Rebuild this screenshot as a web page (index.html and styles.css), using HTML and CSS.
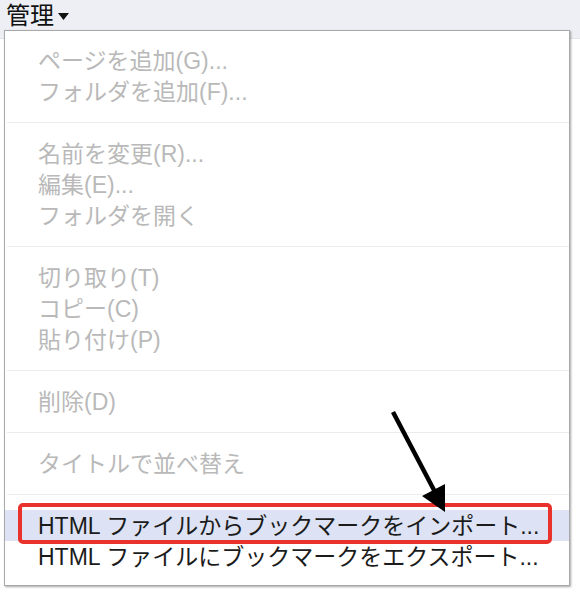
FILE: index.html
```html
<!DOCTYPE html>
<html lang="ja">
<head>
<meta charset="utf-8">
<title>管理メニュー</title>
<link rel="stylesheet" href="styles.css">
</head>
<body>
<div class="topbar">
  <span class="title">管理</span>
  <svg class="caret" width="11" height="7" viewBox="0 0 11 7"><polygon points="0,0 11,0 5.5,7" fill="#111"/></svg>
</div>
<div class="page"></div>
<div class="menu">
  <div class="item disabled">ページを追加(G)...</div>
  <div class="item disabled">フォルダを追加(F)...</div>
  <div class="sep"></div>
  <div class="item disabled">名前を変更(R)...</div>
  <div class="item disabled">編集(E)...</div>
  <div class="item disabled">フォルダを開く</div>
  <div class="sep"></div>
  <div class="item disabled">切り取り(T)</div>
  <div class="item disabled">コピー(C)</div>
  <div class="item disabled">貼り付け(P)</div>
  <div class="sep"></div>
  <div class="item disabled">削除(D)</div>
  <div class="sep"></div>
  <div class="item disabled">タイトルで並べ替え</div>
  <div class="sep"></div>
  <div class="item hover">HTML ファイルからブックマークをインポート...<span class="mark"></span></div>
  <div class="item">HTML ファイルにブックマークをエクスポート...</div>
</div>
<svg class="arrow" width="580" height="604" viewBox="0 0 580 604">
  <line x1="393" y1="412" x2="435" y2="492" stroke="#000" stroke-width="4.5" stroke-linecap="butt"/>
  <polygon points="422,496 445,484 445,512" fill="#000"/>
</svg>
</body>
</html>
```
FILE: styles.css
```css
html, body {
  margin: 0;
  padding: 0;
  background: #ffffff;
  width: 580px;
  height: 604px;
  overflow: hidden;
  font-family: "Liberation Sans", "Noto Sans CJK JP", sans-serif;
}

.topbar {
  height: 38px;
  background: #eeeff4;
  display: flex;
  align-items: flex-start;
  padding-left: 6px;
  gap: 4px;
}

.title {
  font-size: 24px;
  line-height: 32px;
  color: #111;
}

.caret {
  margin-top: 13px;
}

.page {
  height: 6px;
  border-top: 1px solid #e2e3e8;
}

.menu {
  position: absolute;
  left: 4px;
  top: 30px;
  width: 564px;
  background: #fff;
  border: 1px solid #a9a9a9;
  box-shadow: 1px 1px 2px rgba(0, 0, 0, 0.35);
  padding: 14px 0 13px 0;
  display: flex;
  flex-direction: column;
}

.item {
  position: relative;
  height: 31px;
  line-height: 32px;
  padding-left: 33px;
  font-size: 23px;
  color: #1b1b1b;
  white-space: nowrap;
}

.item.disabled {
  color: #b9b9b9;
}

.item.hover {
  background: #dde3f4;
}

.mark {
  position: absolute;
  left: 13px;
  top: -7px;
  width: 526px;
  height: 33px;
  border: 4px solid #e8322b;
  border-radius: 5px;
}

.sep {
  height: 1px;
  background: #ececec;
  margin: 15px 0 15px 2px;
}

.arrow {
  position: absolute;
  left: 0;
  top: 0;
  pointer-events: none;
}
```
